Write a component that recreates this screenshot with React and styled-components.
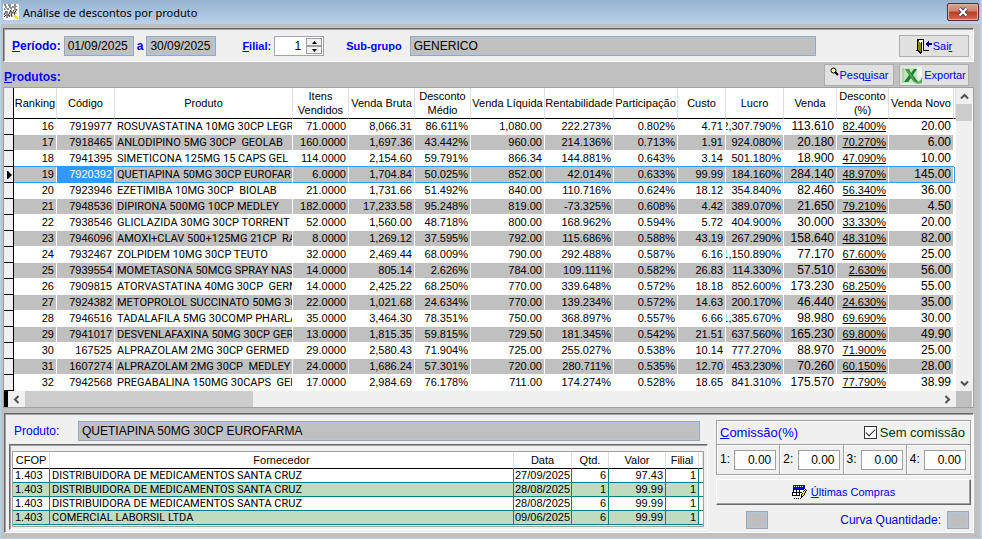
import React from "react";
import styled, { createGlobalStyle, css } from "styled-components";

const Global = createGlobalStyle`
  *, *::before, *::after { box-sizing: border-box; }
  body {
    margin: 0;
    background: #c0c0c0;
    font-family: "Liberation Sans", Arial, sans-serif;
    font-size: 11px;
    line-height: 15px;
    color: #000;
  }
  button, input { font: inherit; color: inherit; margin: 0; border-radius: 0; }
  button { cursor: pointer; }
`;

const Window = styled.main`
  display: flex;
  flex-direction: column;
  min-height: 100vh;
  background: #c0c0c0;
  border: solid #b9d1ea;
  border-width: 0 2px 1px 1px;
`;

const TitleBar = styled.header`
  display: flex;
  align-items: center;
  gap: 4px;
  height: 24px;
  padding: 0 1px 0 2px;
  background: linear-gradient(#98b3d0, #b9d1ea);
`;

const Title = styled.h1`
  flex: 1;
  margin: 0;
  font: 11px "Noto Sans", "Open Sans", sans-serif;
`;

const CloseButton = styled.button`
  display: flex;
  align-items: center;
  justify-content: center;
  width: 32px;
  height: 18px;
  padding: 0;
  border: 1px solid #5a2a30;
  border-radius: 2px;
  background: linear-gradient(#dfa192 0%, #d08070 45%, #bf3a25 50%, #cf6a55 100%);
  box-shadow: inset 0 0 0 1px #e3b0a5;
`;

const Body = styled.div`
  display: flex;
  flex-direction: column;
  padding: 4px 6px 5px 2px;
`;

const Sunken = styled.section`
  background: #f0f0f0;
  border: 1px solid;
  border-color: #696969 #fff #fff #696969;
  box-shadow: inset 1px 1px 0 #a0a0a0;
`;

const FilterBar = styled(Sunken)`
  display: flex;
  align-items: center;
  height: 34px;
  padding: 2px 4px 0 8px;
`;

const BlueLabel = styled.label`
  color: #0000ff;
  font-weight: bold;
  font-size: ${(p) => (p.$small ? 11 : 12)}px;
  white-space: nowrap;
`;

const ReadOnlyInput = styled.input`
  width: ${(p) => (p.$wide ? "100%" : "70px")};
  min-width: 0;
  height: 20px;
  padding: 0 3px;
  border: 1px solid #a0a4ac;
  box-shadow: inset 0 0 0 1px #abc8e8;
  background: #c0c0c0;
  font-size: 12px;
  outline: none;
`;

const PeriodGroup = styled.div`
  display: flex;
  align-items: center;
  gap: 3px;
  margin-right: 26px;
`;

const FilialGroup = styled.div`
  display: flex;
  align-items: center;
  gap: 3px;
  margin-right: 22px;
`;

const GroupField = styled.div`
  display: grid;
  grid-template-columns: auto minmax(0, 1fr);
  align-items: center;
  gap: 8px;
  flex: 1;
  margin-right: 83px;
`;

const Spinner = styled.div`
  display: flex;
  align-items: center;
  width: 50px;
  height: 20px;
  padding-right: 1px;
  border: 1px solid #a0a4ac;
  background: #fff;
`;

const SpinnerInput = styled.input`
  flex: 1;
  min-width: 0;
  height: 18px;
  padding: 0 5px;
  border: 0;
  background: none;
  font-size: 12px;
  text-align: right;
`;

const SpinButtons = styled.div`
  display: flex;
  flex-direction: column;
`;

const SpinButton = styled.button`
  display: flex;
  align-items: center;
  justify-content: center;
  width: 16px;
  height: 8px;
  padding: 0;
  border: 1px solid #a0a0a0;
  background: #f0f0f0;
`;

const FlatButton = styled.button`
  display: flex;
  align-items: center;
  justify-content: center;
  gap: 1px;
  width: 70px;
  height: 22px;
  padding: 0;
  border: 1px solid #adadad;
  background: #e1e1e1;
  color: #0000ff;
  white-space: nowrap;
`;

const GridToolbar = styled.div`
  display: flex;
  align-items: center;
  gap: 5px;
  height: 25px;
  padding: 1px 5px 0 1px;
`;

const SectionTitle = styled.h2`
  flex: 1;
  margin: 0;
  padding-top: 5px;
  color: #0000ff;
  font-size: 12px;
`;

const GridFrame = styled.div`
  display: grid;
  grid-template-columns: minmax(0, 1fr) 16px;
  border: 1px solid #a0a0a0;
  padding-right: 1px;
  background: #fff;
`;

const DataTable = styled.table`
  width: 100%;
  table-layout: fixed;
  border-collapse: separate;
  border-spacing: 0;
`;

const Col = styled.col`
  width: ${(p) => p.$w}px;
`;

const HeadCell = styled.th`
  height: 31px;
  padding: 0;
  border-right: 1px solid #e0e0e0;
  border-bottom: 1px solid #000;
  font-weight: normal;
  line-height: 14px;
  text-align: center;
  vertical-align: middle;
  overflow: hidden;
  white-space: pre;
`;

const HeadMarker = styled(HeadCell)`
  background: #f0f0f0;
  border-right-color: #000;
`;

const MarkerCell = styled.td`
  padding: 0 1px 0 0;
  background: #f0f0f0;
  border-right: 1px solid #000;
  border-bottom: 1px solid #000;
  line-height: 0;
  text-align: right;
  vertical-align: middle;
`;

const Cell = styled.td`
  padding: 0 2px;
  border-right: 1px solid #fff;
  border-bottom: 1px solid #fff;
  line-height: 15px;
  white-space: pre;
  overflow: hidden;
  font-size: ${(p) => (p.$large ? 12 : 11)}px;
  font-family: ${(p) => (p.$name ? "Roboto, sans-serif" : "inherit")};
  ${(p) => p.$name && "padding-right: 0;"}
  ${(p) =>
    p.$active &&
    css`
      &&& {
        background: #3399ff;
        color: #fff;
      }
    `}
`;

const Value = styled.div`
  display: flex;
  justify-content: flex-end;
  height: 15px;
  text-decoration: ${(p) => (p.$underline ? "underline" : "none")};
`;

const EdgeCell = styled.td`
  padding: 0;
  border-left: 1px solid transparent;
`;

const ProductRow = styled.tr`
  ${Cell} {
    background: ${(p) => (p.$alt ? "#c0c0c0" : "#fff")};
  }
  ${(p) =>
    p.$selected &&
    css`
      ${Cell} {
        border-bottom-color: #3399ff;
        box-shadow: 0 -1px 0 #3399ff;
      }
      ${EdgeCell} {
        border-left-color: #3399ff;
      }
    `}
`;

const VScroll = styled.div`
  display: flex;
  flex-direction: column;
  background: #f0f0f0;
`;

const HScroll = styled.div`
  display: flex;
  height: 16px;
  background: #f0f0f0;
  border-left: 4px solid #000;
`;

const ScrollButton = styled.button`
  display: flex;
  align-items: center;
  justify-content: center;
  flex: none;
  width: 17px;
  height: 16px;
  padding: 0;
  border: 0;
  background: #f0f0f0;
`;

const Track = styled.div`
  flex: 1;
`;

const VThumb = styled.div`
  height: 17px;
  background: #cdcdcd;
`;

const HThumb = styled.div`
  width: 24%;
  background: #cdcdcd;
`;

const Corner = styled.div`
  background: #c0c0c0;
`;

const DetailPanel = styled(Sunken)`
  display: grid;
  grid-template-columns: minmax(0, 1fr) 255px;
  gap: 8px;
  margin: 5px 0 0 1px;
  padding: 6px 2px 2px 4px;
`;

const SupplierArea = styled.div`
  display: flex;
  flex-direction: column;
  gap: 3px;
`;

const ProductField = styled.div`
  display: grid;
  grid-template-columns: 64px minmax(0, 1fr);
  align-items: center;
  padding: 1px 8px 0 5px;
`;

const PlainLabel = styled.label`
  color: #0000ff;
  font-size: ${(p) => (p.$large ? 13 : 12)}px;
  white-space: nowrap;
`;

const SupplierFrame = styled(Sunken)`
  padding: 6px 3px 2px 2px;
`;

const SupplierGrid = styled.div`
  border: 1px solid #a0a0a0;
  background: #fff;
  padding-bottom: 1px;
`;

const SupplierHead = styled(HeadCell)`
  height: 17px;
  line-height: 16px;
`;

const SupplierCell = styled.td`
  padding: 0 ${(p) => (p.$flush ? 1 : 2)}px;
  border-right: 1px solid #008080;
  border-bottom: 1px solid #008080;
  line-height: 13px;
  font-family: ${(p) => (p.$name ? "Roboto, sans-serif" : "inherit")};
  white-space: nowrap;
  text-align: ${(p) => (p.$right ? "right" : "left")};
`;

const SupplierEdge = styled.td`
  padding: 0;
  border-bottom: 1px solid #008080;
  background: #fff;
`;

const SupplierRow = styled.tr`
  background: ${(p) => (p.$alt ? "#c0dcc0" : "#fff")};
`;

const SideArea = styled.div`
  display: flex;
  flex-direction: column;
`;

const CommissionBox = styled.fieldset`
  margin: 0;
  padding: 0;
  min-width: 0;
  border: 1px solid #a0a0a0;
  box-shadow: inset 1px 1px 0 #fff, 1px 1px 0 #fff;
`;

const CommissionHead = styled.div`
  display: flex;
  align-items: center;
  justify-content: space-between;
  height: 23px;
  padding: 0 5px 0 3px;
`;

const CheckLabel = styled.label`
  display: flex;
  align-items: center;
  gap: 3px;
  color: #003c00;
  font-size: 13px;
`;

const CheckBox = styled.input`
  appearance: none;
  display: grid;
  place-items: center;
  width: 13px;
  height: 13px;
  border: 1px solid #333;
  background: #fff;
  &:checked::after {
    content: "";
    width: 9px;
    height: 5px;
    border: solid #222;
    border-width: 0 0 1px 1px;
    transform: rotate(-45deg);
    margin-bottom: 3px;
  }
`;

const CommissionFields = styled.div`
  display: grid;
  grid-template-columns: repeat(4, 1fr);
  border-top: 1px solid #a0a0a0;
`;

const CommissionField = styled.label`
  display: flex;
  align-items: center;
  justify-content: space-between;
  height: 29px;
  padding: 0 3px;
  font-size: 12px;
  border-right: 1px solid #a0a0a0;
  box-shadow: inset 1px 1px 0 #fff;
  &:last-child { border-right: 0; padding-right: 4px; }
`;

const CommissionInput = styled.input`
  width: 42px;
  height: 20px;
  padding: 0 4px;
  border: 1px solid #a0a0a0;
  background: #fff;
  font-size: 12px;
  text-align: right;
`;

const RaisedButton = styled.button`
  display: flex;
  align-items: center;
  justify-content: center;
  gap: 4px;
  height: 26px;
  margin-top: 4px;
  padding: 0;
  border: 1px solid;
  border-color: #fff #696969 #696969 #fff;
  box-shadow: inset -1px -1px 0 #a0a0a0;
  background: #f0f0f0;
  color: #0000ff;
`;

const CurveRow = styled.div`
  display: flex;
  align-items: center;
  gap: 6px;
  margin-top: 6px;
  padding: 0 2px 0 30px;
`;

const CurveLabel = styled(PlainLabel)`
  margin-left: auto;
`;

const CurveInput = styled(ReadOnlyInput)`
  width: 22px;
  height: 18px;
`;

const CoverageIcon = () => (
  <svg width="16" height="16" viewBox="0 0 16 16" aria-hidden="true">
    <path fill="#fff" d="M0 0h16v16H0z" />
    <path stroke="#222" fill="none" d="M1 1h2M5 1h3M11 1h2M2 3h2M6 3h2M9 3h4M1 5h1M4 5h2M8 5h1M11 5h2M3 7l-2 4M4 7v7M8 6l-3 6M8 7l1 6M11 6l-3 5M11 8l1 5M14 5l-3 5M1 13l2-2M6 13l1-2" />
    <path stroke="#999" fill="none" d="M2 6l2-2M7 5l2-2M12 4l2-2M2 9h3M7 9h3M12 9h2" />
    <path stroke="#f4e500" strokeWidth="2" d="M11 11l4 4" />
  </svg>
);

const CloseIcon = () => (
  <svg width="12" height="10" viewBox="0 0 12 10" aria-hidden="true">
    <path d="M2.500 1.500l7 7M9.500 1.500l-7 7" stroke="#50404a" strokeWidth="4" />
    <path d="M2.500 1.500l7 7M9.500 1.500l-7 7" stroke="#fff" strokeWidth="2.200" />
  </svg>
);

const DoorIcon = () => (
  <svg width="16" height="15" viewBox="0 0 16 15" shapeRendering="crispEdges" aria-hidden="true">
    <path d="M1 0h7v11H1z" fill="#000" />
    <path d="M3 1h4v10H3z" fill="#fff" />
    <path d="M7 11h6v1H7zM0 11h2v1H0z" fill="#000" />
    <path d="M1 1h1v1h1v1h1v1h1v11H4v-1H3v-1H2v-1H1z" fill="#000" />
    <path d="M2 2h1v1h1v1h1v9H4v-1H3v-1H2z" fill="#868600" />
    <path d="M5 3h1v11H5z" fill="#000" />
    <path d="M10 4h1V3h1V2h1v2h3v2h-3v2h-1V7h-1V6h-1z" fill="#000080" />
  </svg>
);

const SearchIcon = () => (
  <svg width="9" height="16" viewBox="0 0 9 16" aria-hidden="true">
    <circle cx="3.500" cy="3.500" r="2.500" fill="#ffffb0" stroke="#000" />
    <path d="M5 5l3 3" stroke="#000" strokeWidth="2" />
  </svg>
);

const ExcelIcon = () => (
  <svg width="21" height="18" viewBox="0 0 21 18" aria-hidden="true">
    <path d="M0 1h20v17H0z" fill="#e6f2e2" />
    <path d="M2 2h14v15H2z" fill="#c4e3bd" />
    <path d="M15 1c3 0 4 1 5 2v9c-2-2-3-2-5-2z" fill="#f5fbf3" />
    <path d="M20 1v10c-1 4-4 5-8 6 3 1 6 1 8 0z" fill="#4caf50" />
    <path d="M15 11h3M15 14h2" stroke="#f5fbf3" />
    <path d="M3 3h4l2 4 3-4h3l-4 6 5 7h-4l-3-4-3 4H2l5-7z" fill="#1f7d38" />
    <path d="M3 3h3l8 13h-2z" fill="#4da24b" />
    <path d="M1 2v15" stroke="#6dba63" />
  </svg>
);

const OrdersIcon = () => (
  <svg width="15" height="15" viewBox="0 0 15 15" shapeRendering="crispEdges" aria-hidden="true">
    <path d="M1 0h12v10H1z" fill="#fff" />
    <path d="M1 0h12v4H1z" fill="#0000f0" />
    <path d="M2 1h1v1H2zM4 1h1v1H4zM6 1h1v1H6zM8 1h1v1H8zM10 1h1v1h-1z" fill="#fff" />
    <path d="M1 4h11v1H1zM0 7h10v1H0zM0 10h8v1H0zM1 4h1v3H1zM0 7h1v4H0zM4 4h1v6H4zM7 4h1v6H7z" fill="#000" />
    <path d="M2 13h1v1H2zM4 13h1v1H4zM6 13h1v1H6zM8 13h1v1H8z" fill="#000" />
    <path d="M13 4L9 10v3l3-2 3-6z" fill="#000" />
    <path d="M13 5h1v1h-1v2h-1v2h-1v1h-1v-2h1V7h1V6h1z" fill="#ffe600" />
  </svg>
);

const turns = { up: 0, right: 90, down: 180, left: 270 };

const Chevron = ({ to }) => (
  <svg width="9" height="9" viewBox="0 0 9 9" aria-hidden="true">
    <path
      d="M1 6.500L4.500 3L8 6.500"
      fill="none"
      stroke="#505050"
      strokeWidth="2"
      transform={`rotate(${turns[to]} 4.500 4.500)`}
    />
  </svg>
);

const Triangle = ({ down }) => (
  <svg width="5" height="3" viewBox="0 0 5 3" aria-hidden="true">
    <path d={down ? "M0 0h5L2.500 3z" : "M0 3h5L2.500 0z"} />
  </svg>
);

const RowPointer = () => (
  <svg width="5" height="8" viewBox="0 0 5 8" aria-hidden="true">
    <path d="M0 0h1l4 4-4 4H0z" />
  </svg>
);

const columns = [
  { title: "Ranking", w: 43 },
  { title: "Código", w: 58 },
  { title: "Produto", text: true },
  { title: "Itens\nVendidos", w: 56 },
  { title: "Venda Bruta", w: 66 },
  { title: "Desconto\nMédio", w: 56 },
  { title: "Venda Líquida", w: 74 },
  { title: "Rentabilidade", w: 69 },
  { title: "Participação", w: 64 },
  { title: "Custo", w: 48 },
  { title: "Lucro", w: 58 },
  { title: "Venda", w: 53, large: true },
  { title: "Desconto\n(%)", w: 52, underline: true },
  { title: "Venda Novo", w: 65, large: true },
];

const products = [
  ["16", "7919977", "ROSUVASTATINA 10MG 30CP LEGRAND", "71.0000", "8,066.31", "86.611%", "1,080.00", "222.273%", "0.802%", "4.71", "2,307.790%", "113.610", "82.400%", "20.00"],
  ["17", "7918465", "ANLODIPINO 5MG 30CP  GEOLAB", "160.0000", "1,697.36", "43.442%", "960.00", "214.136%", "0.713%", "1.91", "924.080%", "20.180", "70.270%", "6.00"],
  ["18", "7941395", "SIMETICONA 125MG 15 CAPS GEL  EMS", "114.0000", "2,154.60", "59.791%", "866.34", "144.881%", "0.643%", "3.14", "501.180%", "18.900", "47.090%", "10.00"],
  ["19", "7920392", "QUETIAPINA 50MG 30CP EUROFARMA", "6.0000", "1,704.84", "50.025%", "852.00", "42.014%", "0.633%", "99.99", "184.160%", "284.140", "48.970%", "145.00"],
  ["20", "7923946", "EZETIMIBA 10MG 30CP  BIOLAB", "21.0000", "1,731.66", "51.492%", "840.00", "110.716%", "0.624%", "18.12", "354.840%", "82.460", "56.340%", "36.00"],
  ["21", "7948536", "DIPIRONA 500MG 10CP MEDLEY", "182.0000", "17,233.58", "95.248%", "819.00", "-73.325%", "0.608%", "4.42", "389.070%", "21.650", "79.210%", "4.50"],
  ["22", "7938546", "GLICLAZIDA 30MG 30CP TORRENT", "52.0000", "1,560.00", "48.718%", "800.00", "168.962%", "0.594%", "5.72", "404.900%", "30.000", "33.330%", "20.00"],
  ["23", "7946096", "AMOXI+CLAV 500+125MG 21CP  RANBAXY", "8.0000", "1,269.12", "37.595%", "792.00", "115.686%", "0.588%", "43.19", "267.290%", "158.640", "48.310%", "82.00"],
  ["24", "7932467", "ZOLPIDEM 10MG 30CP TEUTO", "32.0000", "2,469.44", "68.009%", "790.00", "292.488%", "0.587%", "6.16", "1,150.890%", "77.170", "67.600%", "25.00"],
  ["25", "7939554", "MOMETASONA 50MCG SPRAY NASAL", "14.0000", "805.14", "2.626%", "784.00", "109.111%", "0.582%", "26.83", "114.330%", "57.510", "2.630%", "56.00"],
  ["26", "7909815", "ATORVASTATINA 40MG 30CP  GERMED", "14.0000", "2,425.22", "68.250%", "770.00", "339.648%", "0.572%", "18.18", "852.600%", "173.230", "68.250%", "55.00"],
  ["27", "7924382", "METOPROLOL SUCCINATO 50MG 30CP", "22.0000", "1,021.68", "24.634%", "770.00", "139.234%", "0.572%", "14.63", "200.170%", "46.440", "24.630%", "35.00"],
  ["28", "7946516", "TADALAFILA 5MG 30COMP PHARLAB", "35.0000", "3,464.30", "78.351%", "750.00", "368.897%", "0.557%", "6.66", "1,385.670%", "98.980", "69.690%", "30.00"],
  ["29", "7941017", "DESVENLAFAXINA 50MG 30CP GERMED", "13.0000", "1,815.35", "59.815%", "729.50", "181.345%", "0.542%", "21.51", "637.560%", "165.230", "69.800%", "49.90"],
  ["30", "167525", "ALPRAZOLAM 2MG 30CP GERMED", "29.0000", "2,580.43", "71.904%", "725.00", "255.027%", "0.538%", "10.14", "777.270%", "88.970", "71.900%", "25.00"],
  ["31", "1607274", "ALPRAZOLAM 2MG 30CP  MEDLEY", "24.0000", "1,686.24", "57.301%", "720.00", "280.711%", "0.535%", "12.70", "453.230%", "70.260", "60.150%", "28.00"],
  ["32", "7942568", "PREGABALINA 150MG 30CAPS  GERMED", "17.0000", "2,984.69", "76.178%", "711.00", "174.274%", "0.528%", "18.65", "841.310%", "175.570", "77.790%", "38.99"],
];

const suppliers = [
  ["1.403", "DISTRIBUIDORA DE MEDICAMENTOS SANTA CRUZ", "27/09/2025", "6", "97.43", "1"],
  ["1.403", "DISTRIBUIDORA DE MEDICAMENTOS SANTA CRUZ", "28/08/2025", "1", "99.99", "1"],
  ["1.403", "DISTRIBUIDORA DE MEDICAMENTOS SANTA CRUZ", "28/08/2025", "6", "99.99", "1"],
  ["1.403", "COMERCIAL LABORSIL LTDA", "09/06/2025", "6", "99.99", "1"],
];

const supplierColumns = [
  { title: "CFOP", w: 37 },
  { title: "Fornecedor" },
  { title: "Data", w: 58 },
  { title: "Qtd.", w: 37, right: true },
  { title: "Valor", w: 57, right: true },
  { title: "Filial", w: 33, right: true },
];

const SELECTED = "19";

function Filters() {
  return (
    <FilterBar aria-label="Filtros">
      <PeriodGroup>
        <BlueLabel htmlFor="inicio"><u>P</u>eríodo:</BlueLabel>
        <ReadOnlyInput id="inicio" readOnly defaultValue="01/09/2025" />
        <BlueLabel htmlFor="fim">a</BlueLabel>
        <ReadOnlyInput id="fim" readOnly defaultValue="30/09/2025" />
      </PeriodGroup>
      <FilialGroup>
        <BlueLabel $small htmlFor="filial"><u>F</u>ilial:</BlueLabel>
        <Spinner>
          <SpinnerInput id="filial" defaultValue="1" />
          <SpinButtons>
            <SpinButton aria-label="Aumentar"><Triangle /></SpinButton>
            <SpinButton aria-label="Diminuir"><Triangle down /></SpinButton>
          </SpinButtons>
        </Spinner>
      </FilialGroup>
      <GroupField>
        <BlueLabel $small htmlFor="subgrupo">Sub-grupo</BlueLabel>
        <ReadOnlyInput $wide id="subgrupo" readOnly defaultValue="GENERICO" />
      </GroupField>
      <FlatButton><DoorIcon /><span>Sai<u>r</u></span></FlatButton>
    </FilterBar>
  );
}

function ProductGrid() {
  return (
    <GridFrame>
      <DataTable>
        <colgroup>
          <Col $w={10} />
          {columns.map((c) => (c.w ? <Col key={c.title} $w={c.w} /> : <col key={c.title} />))}
          <Col $w={2} />
        </colgroup>
        <thead>
          <tr>
            <HeadMarker />
            {columns.map((c) => <HeadCell key={c.title}>{c.title}</HeadCell>)}
            <HeadCell />
          </tr>
        </thead>
        <tbody>
          {products.map((row, r) => {
            const selected = row[0] === SELECTED;
            return (
              <ProductRow key={row[0]} $alt={r % 2 === 1} $selected={selected}>
                <MarkerCell>{selected && <RowPointer />}</MarkerCell>
                {row.map((value, i) => (
                  <Cell
                    key={columns[i].title}
                    $large={columns[i].large}
                    $name={columns[i].text}
                    $active={selected && i === 1}
                  >
                    {columns[i].text ? value : <Value $underline={columns[i].underline}>{value}</Value>}
                  </Cell>
                ))}
                <EdgeCell />
              </ProductRow>
            );
          })}
        </tbody>
      </DataTable>
      <VScroll>
        <ScrollButton aria-label="Subir"><Chevron to="up" /></ScrollButton>
        <VThumb />
        <Track />
        <ScrollButton aria-label="Descer"><Chevron to="down" /></ScrollButton>
      </VScroll>
      <HScroll>
        <ScrollButton aria-label="Esquerda"><Chevron to="left" /></ScrollButton>
        <HThumb />
        <Track />
        <ScrollButton aria-label="Direita"><Chevron to="right" /></ScrollButton>
      </HScroll>
      <Corner />
    </GridFrame>
  );
}

function Suppliers() {
  return (
    <SupplierFrame as="div">
      <SupplierGrid>
        <DataTable>
          <colgroup>
            {supplierColumns.map((c) => (c.w ? <Col key={c.title} $w={c.w} /> : <col key={c.title} />))}
            <Col $w={4} />
          </colgroup>
          <thead>
            <tr>
              {supplierColumns.map((c) => <SupplierHead key={c.title}>{c.title}</SupplierHead>)}
              <SupplierHead />
            </tr>
          </thead>
          <tbody>
            {suppliers.map((row, r) => (
              <SupplierRow key={r} $alt={r % 2 === 1}>
                {row.map((value, i) => (
                  <SupplierCell
                    key={supplierColumns[i].title}
                    $right={supplierColumns[i].right}
                    $name={i === 1}
                    $flush={i === 2}
                  >
                    {value}
                  </SupplierCell>
                ))}
                <SupplierEdge />
              </SupplierRow>
            ))}
          </tbody>
        </DataTable>
      </SupplierGrid>
    </SupplierFrame>
  );
}

export default function App() {
  return (
    <>
      <Global />
      <Window>
        <TitleBar>
          <CoverageIcon />
          <Title>Análise de descontos por produto</Title>
          <CloseButton aria-label="Fechar"><CloseIcon /></CloseButton>
        </TitleBar>
        <Body>
          <Filters />
          <GridToolbar>
            <SectionTitle><u>P</u>rodutos:</SectionTitle>
            <FlatButton><SearchIcon /><span>Pesq<u>u</u>isar</span></FlatButton>
            <FlatButton><ExcelIcon /><span>Exportar</span></FlatButton>
          </GridToolbar>
          <ProductGrid />
          <DetailPanel>
            <SupplierArea>
              <ProductField>
                <PlainLabel htmlFor="produto">Produto:</PlainLabel>
                <ReadOnlyInput $wide id="produto" readOnly defaultValue="QUETIAPINA 50MG 30CP EUROFARMA" />
              </ProductField>
              <Suppliers />
            </SupplierArea>
            <SideArea>
              <CommissionBox>
                <CommissionHead>
                  <PlainLabel as="span" $large><u>C</u>omissão(%)</PlainLabel>
                  <CheckLabel><CheckBox type="checkbox" defaultChecked />Sem comissão</CheckLabel>
                </CommissionHead>
                <CommissionFields>
                  {["1:", "2:", "3:", "4:"].map((name) => (
                    <CommissionField key={name}>
                      {name}
                      <CommissionInput defaultValue="0.00" />
                    </CommissionField>
                  ))}
                </CommissionFields>
              </CommissionBox>
              <RaisedButton><OrdersIcon /><span><u>Ú</u>ltimas Compras</span></RaisedButton>
              <CurveRow>
                <CurveInput readOnly aria-label="Curva" />
                <CurveLabel htmlFor="curva">Curva Quantidade:</CurveLabel>
                <CurveInput readOnly id="curva" />
              </CurveRow>
            </SideArea>
          </DetailPanel>
        </Body>
      </Window>
    </>
  );
}
